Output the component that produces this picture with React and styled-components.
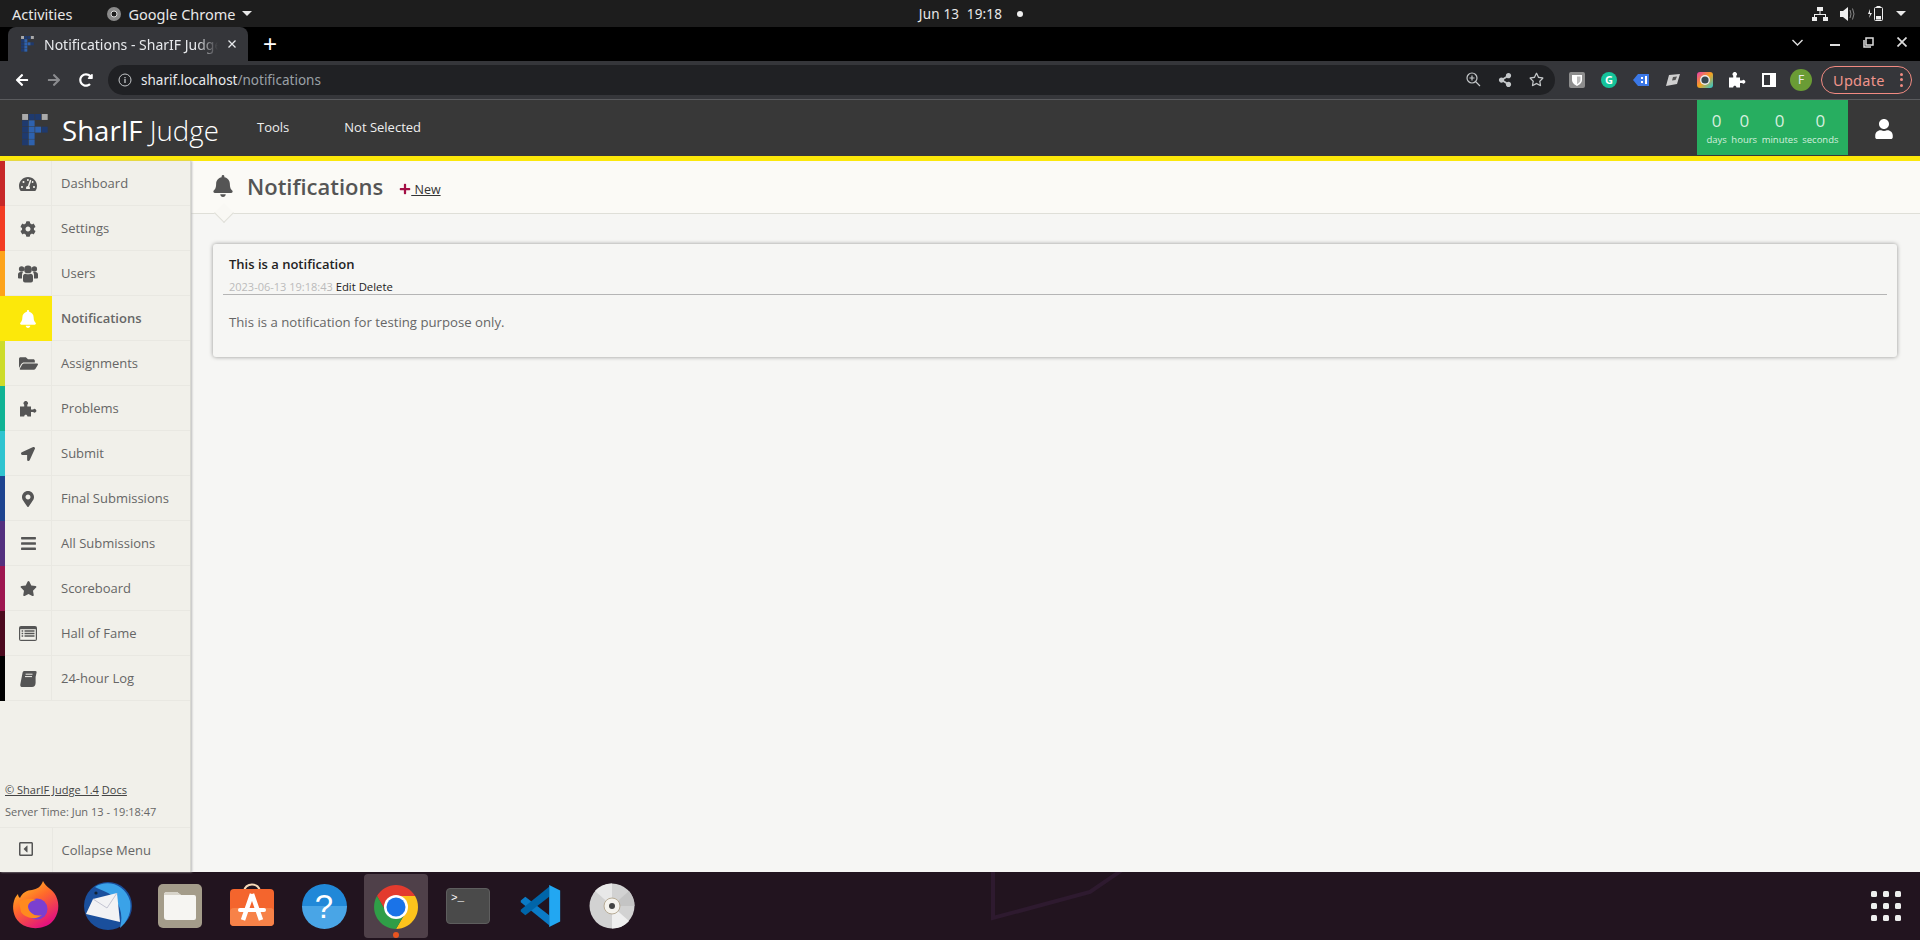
import React from "react";
import styled, { createGlobalStyle } from "styled-components";
import {
  FaTachometerAlt, FaCog, FaBell, FaFolderOpen, FaLocationArrow,
  FaMapMarkerAlt, FaBars, FaStar, FaRegCaretSquareLeft, FaUser, FaPlus,
  FaArrowLeft, FaArrowRight, FaRedoAlt, FaRegStar, FaShareAlt,
} from "react-icons/fa";

const Global = createGlobalStyle`
  html, body { margin: 0; padding: 0; height: 940px; overflow: hidden; background: #f6f6f4; }
  * { box-sizing: border-box; }
  body { font-family: "Open Sans", "Noto Sans", sans-serif; }
  a { color: inherit; }
`;

const Screen = styled.div`display: flex; flex-direction: column; width: 1920px; height: 940px; overflow: hidden;`;

/* GNOME bar */
const TopBar = styled.div`
  height: 27px; flex: none; background: #1d1d1d; color: #e8e8e8; display: grid; grid-template-columns: 1fr auto 1fr;
  align-items: center; font: 14.5px "Noto Sans", sans-serif; padding: 0 12px;
`;
const TopLeft = styled.div`display: flex; align-items: center;`;
const AppMenu = styled.div`display: flex; align-items: center; gap: 7px; margin-left: 35px;`;
const Caret = styled.span`width: 0; height: 0; border-left: 5px solid transparent; border-right: 5px solid transparent; border-top: 5px solid #e8e8e8;`;
const Clock = styled.div`display: flex; align-items: center; padding-left: 22px; gap: 15px; font-size: 13.5px; letter-spacing: .2px;`;
const Dot = styled.span`width: 6px; height: 6px; border-radius: 50%; background: #eee;`;
const TopRight = styled.div`display: flex; justify-content: flex-end; align-items: center; gap: 12px; padding-right: 2px;`;

/* tabs */
const TabStrip = styled.div`height: 34px; flex: none; background: #000; display: flex; align-items: flex-end; padding-left: 8px; color: #e8eaed;`;
const Tab = styled.div`
  width: 240px; height: 34px; background: #35363a; border-radius: 8px 8px 0 0; display: flex; align-items: center;
  padding: 0 12px 0 13px; font: 14px "Noto Sans", sans-serif; gap: 10px;
`;
const TabTitle = styled.span`flex: 1; white-space: nowrap; overflow: hidden; color: #e8eaed;
  mask-image: linear-gradient(90deg, #000 88%, transparent);`;
const NewTab = styled.span`font: 24px/1 "Liberation Sans", sans-serif; margin-left: 15px; margin-bottom: 5px; color: #fff;`;
const WinControls = styled.div`margin-left: auto; display: flex; align-items: center; gap: 23px; padding: 0 13px 4px 0; height: 34px; svg:first-child { margin-right: 4px; }`;

/* toolbar */
const Toolbar = styled.div`height: 39px; flex: none; background: #35363a; border-bottom: 1px solid #5a5b5e; display: flex; align-items: center; padding-bottom: 1px;`;
const NavIcons = styled.div`width: 108px; flex: none; display: flex; align-items: center; padding-left: 15px; gap: 18px; font-size: 14px; color: #fff;`;
const NavBtn = styled.span`display: flex; color: ${p => p.$dim ? "#8a8b8e" : "#fff"}; font-size: 14px;`;
const Omnibox = styled.div`width: 1447px; height: 30px; flex: none; background: #202124; border-radius: 15px; display: flex; align-items: center; padding: 0 11px 0 10px; font: 13.5px "Noto Sans", sans-serif; color: #9aa0a6;`;
const Url = styled.span`margin-left: 9px; flex: 1; b { font-weight: 400; color: #e8eaed; }`;
const OmniIcons = styled.div`display: flex; align-items: center; gap: 17px; color: #c4c7c9;`;
const Exts = styled.div`display: flex; align-items: center; gap: 8px; padding-left: 10px; flex: 1;`;
const Ext = styled.span`width: 24px; height: 24px; display: flex; align-items: center; justify-content: center; color: #fff;`;
const Grammarly = styled.span`width: 16px; height: 16px; border-radius: 50%; background: #15c39a; color: #fff; font: 700 11px/16px "Noto Sans", sans-serif; text-align: center;`;
const Avatar = styled.span`width: 22px; height: 22px; border-radius: 50%; background: #6a9c35; color: #e8eaed; font: 12px/22px "Noto Sans", sans-serif; text-align: center;`;
const UpdatePill = styled.div`width: 91px; height: 28px; border: 1px solid #f28b82; border-radius: 14px; color: #f0958c; font: 14.5px "Noto Sans", sans-serif; display: flex; align-items: center; justify-content: space-between; padding: 0 8px 0 11px; letter-spacing: .3px;`;
const Kebab = styled.span`display: flex; flex-direction: column; gap: 2.5px; i { width: 3px; height: 3px; border-radius: 50%; background: #f28b82; display: block; }`;

/* site header */
const SiteHeader = styled.header`height: 61px; flex: none; background: #383838; border-bottom: 5px solid #fce80a; display: flex; align-items: flex-start; color: #f0f0f0;`;
const Brand = styled.div`display: flex; align-items: center; gap: 14px; padding: 8px 0 0 22px; height: 52px; width: 257px; flex: none;`;
const BrandName = styled.div`font-size: 27.6px; color: #fff; white-space: nowrap; line-height: 36px; span { font-weight: 300; }`;
const TopNav = styled.nav`display: flex; gap: 55px; font-size: 13px; height: 53px; align-items: center; color: #eee;`;
const Timer = styled.div`margin-left: auto; width: 151px; height: 55px; background: #27ae60; display: flex; justify-content: center; gap: 4.5px; padding-top: 8px; color: #d5efdf;`;
const TimerCell = styled.div`display: flex; flex-direction: column; align-items: center; font-size: 9.5px; line-height: 13px; b { font-weight: 400; font-size: 17px; line-height: 25px; }`;
const UserBtn = styled.div`width: 72px; height: 55px; display: flex; align-items: center; justify-content: center; font-size: 20px; color: #fff; padding-top: 2px;`;

/* main */
const Main = styled.div`flex: 1; display: flex; min-height: 0;`;
const Sidebar = styled.aside`width: 191px; flex: none; background: #f1f0ea; box-shadow: 1px 0 2px #bbb; border-right: 1px solid #d8d8d2; display: flex; flex-direction: column; position: relative; z-index: 1;`;
const Menu = styled.div`display: flex; flex-direction: column;`;
const MenuRow = styled.div`
  height: 45px; display: flex; align-items: stretch; border-bottom: 1px solid #e9e8e2; color: #666; font-size: 13px;
  font-weight: ${p => p.$active ? 600 : 400};
`;
const IconCell = styled.div`
  width: 52px; flex: none; display: flex; align-items: center; justify-content: center; font-size: ${p => p.$size}px;
  color: ${p => p.$active ? "#fff" : "#555"}; background: ${p => p.$active ? p.$color : "transparent"};
  border-left: 5px solid ${p => p.$color}; border-right: 1px solid ${p => p.$active ? p.$color : "#e9e8e2"};
  margin-bottom: -1px;
`;
const RowLabel = styled.div`display: flex; align-items: center; padding-left: 9px; white-space: nowrap; padding-bottom: 1px;`;
const SideFooter = styled.div`margin-top: auto; font-size: 11px; color: #666; padding: 0 5px 4px; line-height: 22px; a { color: #444; }`;
const CollapseRow = styled.div`height: 45px; flex: none; border-top: 1px solid #e9e8e2; display: flex; color: #666; font-size: 13px;`;
const CollapseIcon = styled.div`width: 52.5px; flex: none; border-right: 1px solid #e9e8e2; display: flex; align-items: center; justify-content: center; font-size: 16px; color: #555; padding-bottom: 3px;`;
const CollapseLabel = styled.div`display: flex; align-items: center; padding-left: 9px;`;

const Content = styled.main`flex: 1; background: #f6f6f4; display: flex; flex-direction: column; min-width: 0;`;
const PageHead = styled.div`
  height: 53px; flex: none; background: #fbfaf6; border-bottom: 1px solid #dfdfd8; display: flex; align-items: center; padding: 0 0 0 21px; position: relative; color: #555;
  &::after { content: ""; position: absolute; left: 26px; bottom: -7px; width: 13px; height: 13px; background: #f9f8f4; border-right: 1px solid #dfdfd8; border-bottom: 1px solid #dfdfd8; transform: rotate(45deg); }
`;
const HeadBell = styled.span`display: flex; font-size: 22px; color: #555; width: 35px; padding-bottom: 2px;`;
const PageTitle = styled.h1`margin: 0 0 2px; font-size: 22px; font-weight: 600; color: #555; line-height: 30px;`;
const NewLink = styled.a`margin-left: 16px; padding-top: 4px; font-size: 12.5px; color: #333; text-decoration: underline; display: flex; align-items: center; svg { color: #a30f45; font-size: 12px; }`;
const Card = styled.section`
  margin: 30px 23px 0 22px; height: 113px; background: #f6f6f4; border-radius: 3px; box-shadow: 0 0 4px rgba(0,0,0,.4);
  padding: 11px 10px 0 10px;
`;
const CardTitle = styled.div`font-size: 13px; font-weight: 600; color: #222; padding-left: 6px; line-height: 18px;`;
const CardMeta = styled.div`font-size: 11px; color: #bbb; border-bottom: 1px solid #b5b5b5; padding-left: 6px; line-height: 14px; margin-top: 7px; height: 15px; span { color: #222; font-size: 11.3px; }`;
const CardBody = styled.div`font-size: 13.2px; color: #666; padding-left: 6px; margin-top: 18px; line-height: 18px;`;

/* dock */
const Dock = styled.footer`height: 68px; flex: none; background: #22141f; display: flex; align-items: center; position: relative;`;
const Wallpaper = styled.svg`position: absolute; left: 980px; top: 0; width: 160px; height: 50px;`;
const DockCell = styled.div`width: 72px; height: 68px; display: flex; align-items: center; justify-content: center; position: relative;`;
const DockActive = styled.div`width: 64px; height: 64px; border-radius: 4px; background: #4f4049; display: flex; align-items: center; justify-content: center;
  &::after { content: ""; position: absolute; bottom: 2px; left: 33px; width: 6px; height: 6px; border-radius: 50%; background: #e95420; }`;
const HelpIcon = styled.div`width: 45px; height: 45px; border-radius: 50%; background: linear-gradient(#2088d8 50%, #49a5e6 50%); color: #fff; font: 33px/45px "Liberation Sans", sans-serif; text-align: center;`;
const TerminalIcon = styled.div`width: 44px; height: 36px; border-radius: 4px; background: #4a4a4a; border: 1px solid #5e5e5e; color: #fff; font: 11px/12px "Liberation Mono", monospace; padding: 3px 4px;`;
const AppGrid = styled.div`margin-left: auto; margin-right: 19px; display: grid; grid-template-columns: repeat(3, 6px); gap: 6px;`;
const GridDot = styled.i`width: 6px; height: 6px; border-radius: 1.5px; background: #eee; display: block;`;

const UsersIcon = () => (
  <svg width="20" height="18" viewBox="0 0 20 18" fill="currentColor">
    <circle cx="3.6" cy="4" r="2.7" /><circle cx="16.4" cy="4" r="2.7" /><circle cx="10" cy="4.4" r="3.9" />
    <path d="M0 13V9.5C0 8 1 7 2.4 7H5C4 8.2 4 9.5 4 12V13.4H1Q0 13.4 0 13Z" />
    <path d="M20 13V9.5C20 8 19 7 17.6 7H15C16 8.2 16 9.5 16 12V13.4H19Q20 13.4 20 13Z" />
    <path d="M5 15.5V11.5C5 9.5 6 8.7 7.5 8.7Q10 10 12.5 8.7C14 8.7 15 9.5 15 11.5V15.5Q15 17.5 13 17.5H7Q5 17.5 5 15.5Z" />
  </svg>
);
const PuzzleIcon = () => (
  <svg width="17" height="16" viewBox="0 0 17 16" fill="currentColor">
    <path d="M0 5.5H4.2V3.8A2.2 2.2 0 1 1 7.3 3.8V5.5H11V8.5H13.2A1.8 1.8 0 1 1 13.2 11H11V15.5H7.4C7.6 13 4 13 4.2 15.5H0Z" />
  </svg>
);
const ListIcon = () => (
  <svg width="18" height="15" viewBox="0 0 18 15">
    <rect width="18" height="15" rx="2" fill="currentColor" />
    <rect x="1.2" y="3.2" width="15.6" height="10.6" fill="#f1f0ea" />
    <path d="M2.6 5h1.6M2.6 7.5h1.6M2.6 10h1.6M5.5 5h10M5.5 7.5h10M5.5 10h10" stroke="currentColor" strokeWidth="1.3" />
  </svg>
);
const BookIcon = () => (
  <svg width="17" height="16" viewBox="0 0 17 16" fill="currentColor">
    <path d="M4 0H15.5Q17 0 16.6 1.5L14 13Q13.7 14.5 12 14.5H3.6Q2.6 14.5 2.8 13.4Q3 12.4 4 12.4H12.4Q13 12.4 13.2 11.6L15.6 1.6V12Q15.4 15.9 12 16H2.6Q0 16 .3 13.4L2.6 1.5Q3 0 4 0Z" />
    <path d="M5.6 3.2H12.5M5 5.6H12" stroke="#f1f0ea" strokeWidth="1" />
  </svg>
);

const items = [
  ["Dashboard", FaTachometerAlt, "#c72828", 18],
  ["Settings", FaCog, "#f33c23", 16],
  ["Users", UsersIcon, "#fda31b", 17],
  ["Notifications", FaBell, "#fce80a", 18, true],
  ["Assignments", FaFolderOpen, "#cddc2a", 19],
  ["Problems", PuzzleIcon, "#10b394", 17],
  ["Submit", FaLocationArrow, "#2fc4d0", 14],
  ["Final Submissions", FaMapMarkerAlt, "#1e4490", 16],
  ["All Submissions", FaBars, "#54307f", 17],
  ["Scoreboard", FaStar, "#9e1650", 17],
  ["Hall of Fame", ListIcon, "#4c0a1e", 17],
  ["24-hour Log", BookIcon, "#000", 17],
];

const Logo = ({ s = 26 }) => {
  const d = "#1f3a6e", b = "#2e62ae", g = "#aaaaaa";
  const cells = [
    [0,0,g],[1,0,d],[2,0,d],[3,0,g],
    [0,1,d],[1,1,b],
    [0,2,d],[1,2,b],[2,2,b],[3,2,d],
    [0,3,d],[1,3,b],
    [0,4,d],[1,4,b],
  ];
  return (
    <svg width={s} height={s * 1.2} viewBox="0 0 26 31.5">
      {cells.map(([x, y, c]) => <rect key={x + "-" + y} x={x * 6.6} y={y * 6.4} width="6" height="6" fill={c} />)}
    </svg>
  );
};

const ChromeLogo = ({ s = 48 }) => (
  <svg width={s} height={s} viewBox="0 0 48 48">
    <path d="M5 13A22 22 0 0 1 43.05 13L24 13A11 11 0 0 0 14.47 29.5Z" fill="#e33b2e" transform="translate(0 1)" />
    <path d="M43.05 13A22 22 0 0 1 24 46L33.53 29.5A11 11 0 0 0 24 13Z" fill="#fcc31c" transform="translate(0 1)" />
    <path d="M24 46A22 22 0 0 1 5 13L14.47 29.5A11 11 0 0 0 33.53 29.5Z" fill="#2f9e47" transform="translate(0 1)" />
    <circle cx="24" cy="25" r="12" fill="#fff" />
    <circle cx="24" cy="25" r="9.5" fill="#1a73e8" />
  </svg>
);

const Firefox = () => (
  <svg width="48" height="50" viewBox="0 0 48 50">
    <defs>
      <linearGradient id="ff" x1="0" y1="0" x2="0.6" y2="1"><stop offset="0" stopColor="#ffd21f" /><stop offset=".5" stopColor="#ff6a2a" /><stop offset="1" stopColor="#e3127e" /></linearGradient>
    </defs>
    <path d="M31 0C34 7 41 8 44 15C48 23 47 34 40 41C32 49 16 49 8 42C1 36 0 26 2 20C3 16 5 14 6 13C6 15 7 16 8 17C10 12 15 9 20 9C25 8 29 6 31 0Z" fill="url(#ff)" />
    <circle cx="25" cy="28" r="10.5" fill="#7b3fd0" />
    <path d="M7 21C12 17 20 17 24 19C18 20 16 23 16 26C17 32 23 36 30 34C25 39 14 38 9 31Z" fill="#ff8a1f" />
  </svg>
);
const Thunderbird = () => (
  <svg width="50" height="50" viewBox="0 0 50 50">
    <circle cx="25" cy="25" r="24" fill="#1a4f9c" />
    <path d="M12 6C24 -2 42 3 47 20C49 30 45 40 37 47C40 36 38 26 32 18C28 12 20 10 12 6Z" fill="#3aa2e8" />
    <path d="M10 18L34 12L37 41L3 33Z" fill="#f2f2f4" />
    <path d="M10 18L24 27L34 12" fill="none" stroke="#c3c4d2" strokeWidth="1" />
    <circle cx="13" cy="12" r="1.6" fill="#123" />
  </svg>
);
const Files = () => (
  <svg width="46" height="46" viewBox="0 0 46 46">
    <rect x="1" y="1" width="44" height="44" rx="5" fill="#a49c8a" />
    <path d="M7 12a3 3 0 0 1 3-3h10l4 3h13a2 2 0 0 1 2 2v21a2 2 0 0 1-2 2H10a3 3 0 0 1-3-3Z" fill="#f6f5f2" />
    <path d="M7 12a3 3 0 0 1 3-3h10l4 3Z" fill="#d8d4ca" />
  </svg>
);
const Software = () => (
  <svg width="46" height="48" viewBox="0 0 46 48">
    <path d="M15 10C15 0 31 0 31 10" fill="none" stroke="#f6d9b8" strokeWidth="2" />
    <rect x="1" y="7" width="44" height="37" rx="4" fill="#f4652d" />
    <rect x="1" y="26" width="44" height="18" rx="4" fill="#f78248" />
    <path d="M23 12L14 38M23 12L32 38" stroke="#fff" strokeWidth="4.5" fill="none" />
    <rect x="9" y="26" width="28" height="4" rx="2" fill="#fff" />
  </svg>
);
const VSCode = () => (
  <svg width="44" height="44" viewBox="0 0 48 48">
    <path d="M34 45L34 34L8 14L3 18L3 20Z" fill="#0a7bc6" />
    <path d="M34 3L34 14L8 34L3 30L3 28Z" fill="#0065a9" />
    <path d="M34 1L46 7V41L34 47Z" fill="#22a7f2" />
  </svg>
);
const Disc = () => (
  <svg width="46" height="46" viewBox="0 0 46 46">
    <circle cx="23" cy="23" r="22.5" fill="#d2d2d2" />
    <path d="M23 23L6 8A22.5 22.5 0 0 1 23 .5Z" fill="#e8e8e8" />
    <path d="M23 23L40 38A22.5 22.5 0 0 1 23 45.5Z" fill="#efefef" />
    <path d="M23 23L45.5 23A22.5 22.5 0 0 0 40 8Z" fill="#c4c4c4" />
    <circle cx="23" cy="23" r="8" fill="#f5f3ee" stroke="#b7ab95" strokeWidth="1" />
    <circle cx="23" cy="23" r="3" fill="#444" />
  </svg>
);

const Network = () => (
  <svg width="16" height="14" viewBox="0 0 16 14" fill="#eee">
    <rect x="5" y="0" width="6" height="4" /><rect x="0" y="10" width="5" height="4" /><rect x="11" y="10" width="5" height="4" />
    <path d="M7.5 4h1v3H14v3h-1V8H3v2H2V7h5.5Z" />
  </svg>
);
const Volume = () => (
  <svg width="16" height="14" viewBox="0 0 16 14" fill="#eee">
    <path d="M0 4h3l5-4v14l-5-4H0Z" />
    <path d="M10 3q2 4 0 8M12.5 1.5q3 5.5 0 11" stroke="#888" fill="none" />
  </svg>
);
const Battery = () => (
  <svg width="16" height="15" viewBox="0 0 16 15" fill="none">
    <path d="M2 3L0 8h2L1 12l3-5H2Z" fill="#eee" />
    <rect x="6.5" y="1.5" width="8" height="13" rx="1" stroke="#eee" />
    <rect x="8.5" y="0" width="4" height="1.5" fill="#eee" />
    <rect x="8" y="10" width="5" height="3.5" fill="#eee" />
  </svg>
);
const InfoIcon = () => (
  <svg width="14" height="14" viewBox="0 0 14 14" fill="none" stroke="#c4c7c9"><circle cx="7" cy="7" r="6" /><path d="M7 6v4M7 4v1.2" strokeWidth="1.3" /></svg>
);
const ZoomIcon = () => (
  <svg width="15" height="15" viewBox="0 0 15 15" fill="none" stroke="#c4c7c9" strokeWidth="1.2"><circle cx="6" cy="6" r="5" /><path d="M9.5 9.5L14 14M6 3.5v5M3.5 6h5" /></svg>
);
const Bitwarden = () => (
  <svg width="16" height="16" viewBox="0 0 16 16"><rect width="16" height="16" rx="2" fill="#8d8d8d" /><path d="M3 3h10v5c0 3-3 5-5 6-2-1-5-3-5-6Z" fill="#fff" /><path d="M8 4.5h3.5V8c0 2-2 3.4-3.5 4.2Z" fill="#bbb" /></svg>
);
const TagExt = () => (
  <svg width="16" height="14" viewBox="0 0 16 14"><path d="M5 1h11v12H5L0 7Z" fill="#3b78e7" /><path d="M8 4h2v2H8ZM8 8h2v2H8ZM12 3h2v8h-2Z" fill="#fff" /></svg>
);
const TileExt = () => (
  <svg width="16" height="14" viewBox="0 0 16 14"><path d="M4 2l11-1-3 10-11 2Z" fill="#cfcfcf" /><path d="M8 4l4-.5-1.5 3.5-3.5.5Z" fill="#555" /></svg>
);
const LensExt = () => (
  <svg width="16" height="16" viewBox="0 0 16 16">
    <defs><linearGradient id="ln" x1="0" y1="0" x2="1" y2="1"><stop offset="0" stopColor="#e93cac" /><stop offset=".5" stopColor="#f6a21e" /><stop offset="1" stopColor="#1fc8d8" /></linearGradient></defs>
    <rect width="16" height="16" rx="3" fill="url(#ln)" /><circle cx="8" cy="8" r="5" fill="#eee" /><circle cx="8" cy="8" r="3.6" fill="#37474f" />
  </svg>
);
const SideExt = () => (
  <svg width="14" height="14" viewBox="0 0 14 14"><rect width="14" height="14" fill="#fff" /><rect x="2" y="2" width="6" height="10" fill="#35363a" /></svg>
);
const WinMin = () => <svg width="10" height="10" viewBox="0 0 10 10"><rect y="7" width="10" height="2" fill="#ddd" /></svg>;
const WinMax = () => <svg width="11" height="11" viewBox="0 0 11 11" fill="none" stroke="#ddd" strokeWidth="1.5"><rect x="3" y="1" width="7" height="7" /><path d="M1 3v7h7" /></svg>;
const WinClose = () => <svg width="10" height="10" viewBox="0 0 10 10" stroke="#ddd" strokeWidth="1.7"><path d="M.5.5l9 9M9.5.5l-9 9" /></svg>;
const Chevron = () => <svg width="11" height="7" viewBox="0 0 11 7" fill="none" stroke="#ddd" strokeWidth="1.4"><path d="M.5 1l5 5 5-5" /></svg>;
const TabClose = () => <svg width="8" height="8" viewBox="0 0 8 8" stroke="#e8eaed" strokeWidth="1.3"><path d="M.5.5l7 7M7.5.5l-7 7" /></svg>;
const ChromeMono = () => (
  <svg width="14" height="14" viewBox="0 0 14 14"><circle cx="7" cy="7" r="7" fill="#8a8a8a" /><circle cx="7" cy="7" r="3" fill="#1d1d1d" stroke="#ddd" /></svg>
);

export default function App() {
  return (
    <Screen>
      <Global />
      <TopBar>
        <TopLeft>
          Activities
          <AppMenu><ChromeMono />Google Chrome<Caret /></AppMenu>
        </TopLeft>
        <Clock>Jun 13&nbsp; 19:18<Dot /></Clock>
        <TopRight><Network /><Volume /><Battery /><Caret /></TopRight>
      </TopBar>

      <TabStrip>
        <Tab>
          <Logo s={13} />
          <TabTitle>Notifications - SharIF Judge</TabTitle>
          <TabClose />
        </Tab>
        <NewTab>+</NewTab>
        <WinControls><Chevron /><WinMin /><WinMax /><WinClose /></WinControls>
      </TabStrip>

      <Toolbar>
        <NavIcons>
          <NavBtn><FaArrowLeft /></NavBtn>
          <NavBtn $dim><FaArrowRight /></NavBtn>
          <NavBtn><FaRedoAlt /></NavBtn>
        </NavIcons>
        <Omnibox>
          <InfoIcon />
          <Url><b>sharif.localhost</b>/notifications</Url>
          <OmniIcons><ZoomIcon /><FaShareAlt size={14} /><FaRegStar size={15} /></OmniIcons>
        </Omnibox>
        <Exts>
          <Ext><Bitwarden /></Ext>
          <Ext><Grammarly>G</Grammarly></Ext>
          <Ext><TagExt /></Ext>
          <Ext><TileExt /></Ext>
          <Ext><LensExt /></Ext>
          <Ext><PuzzleIcon /></Ext>
          <Ext><SideExt /></Ext>
          <Ext><Avatar>F</Avatar></Ext>
          <UpdatePill>Update<Kebab><i /><i /><i /></Kebab></UpdatePill>
        </Exts>
      </Toolbar>

      <SiteHeader>
        <Brand><Logo s={26} /><BrandName>SharIF <span>Judge</span></BrandName></Brand>
        <TopNav><span>Tools</span><span>Not Selected</span></TopNav>
        <Timer>
          <TimerCell><b>0</b>days</TimerCell>
          <TimerCell><b>0</b>hours</TimerCell>
          <TimerCell><b>0</b>minutes</TimerCell>
          <TimerCell><b>0</b>seconds</TimerCell>
        </Timer>
        <UserBtn><FaUser /></UserBtn>
      </SiteHeader>

      <Main>
        <Sidebar>
          <Menu>
            {items.map(([label, Icon, color, size, active]) => (
              <MenuRow key={label} $active={active}>
                <IconCell $color={color} $size={size} $active={active}><Icon /></IconCell>
                <RowLabel>{label}</RowLabel>
              </MenuRow>
            ))}
          </Menu>
          <SideFooter>
            <a href="#a">© SharIF Judge 1.4</a> <a href="#b">Docs</a><br />
            Server Time: Jun 13 - 19:18:47
          </SideFooter>
          <CollapseRow>
            <CollapseIcon><FaRegCaretSquareLeft /></CollapseIcon>
            <CollapseLabel>Collapse Menu</CollapseLabel>
          </CollapseRow>
        </Sidebar>
        <Content>
          <PageHead>
            <HeadBell><FaBell /></HeadBell>
            <PageTitle>Notifications</PageTitle>
            <NewLink href="#n"><FaPlus />&nbsp;New</NewLink>
          </PageHead>
          <Card>
            <CardTitle>This is a notification</CardTitle>
            <CardMeta>2023-06-13 19:18:43 <span>Edit Delete</span></CardMeta>
            <CardBody>This is a notification for testing purpose only.</CardBody>
          </Card>
        </Content>
      </Main>

      <Dock>
        <Wallpaper viewBox="0 0 160 50" fill="none" stroke="#2e1a2f" strokeWidth="4">
          <path d="M13 0V46L110 20L145 -4" />
        </Wallpaper>
        <DockCell><Firefox /></DockCell>
        <DockCell><Thunderbird /></DockCell>
        <DockCell><Files /></DockCell>
        <DockCell><Software /></DockCell>
        <DockCell><HelpIcon>?</HelpIcon></DockCell>
        <DockCell><DockActive><ChromeLogo /></DockActive></DockCell>
        <DockCell><TerminalIcon>&gt;_</TerminalIcon></DockCell>
        <DockCell><VSCode /></DockCell>
        <DockCell><Disc /></DockCell>
        <AppGrid>{Array.from({ length: 9 }, (_, i) => <GridDot key={i} />)}</AppGrid>
      </Dock>
    </Screen>
  );
}
